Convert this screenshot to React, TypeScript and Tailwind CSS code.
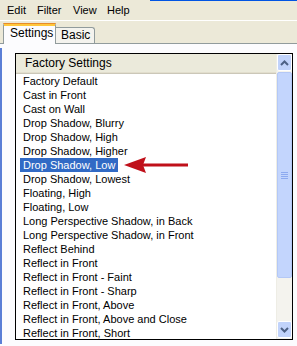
const presets = [
  "Factory Default",
  "Cast in Front",
  "Cast on Wall",
  "Drop Shadow, Blurry",
  "Drop Shadow, High",
  "Drop Shadow, Higher",
  "Drop Shadow, Low",
  "Drop Shadow, Lowest",
  "Floating, High",
  "Floating, Low",
  "Long Perspective Shadow, in Back",
  "Long Perspective Shadow, in Front",
  "Reflect Behind",
  "Reflect in Front",
  "Reflect in Front - Faint",
  "Reflect in Front - Sharp",
  "Reflect in Front, Above",
  "Reflect in Front, Above and Close",
  "Reflect in Front, Short",
];

const selected = "Drop Shadow, Low";

function Chevron({ up }: { up?: boolean }) {
  return (
    <svg width="9" height="6" viewBox="0 0 9 6">
      <path
        d={up ? "M1 5 L4.5 1.5 L8 5" : "M1 1 L4.5 4.5 L8 1"}
        fill="none"
        stroke="#4d6185"
        strokeWidth="2"
      />
    </svg>
  );
}

function ScrollBar() {
  return (
    <div className="flex flex-col w-[16px] bg-[#f4f3ee] border-l border-[#eeede5]">
      <div className="h-[17px] flex items-center justify-center rounded-[2px] border border-white bg-[#c1d3fb]">
        <Chevron up />
      </div>
      <div className="h-[206px] mt-px flex items-center justify-center rounded-[2px] border border-[#b4c8f6] bg-[#c3d5fd]">
        <div className="flex flex-col gap-px">
          <div className="w-[7px] h-px bg-[#8daaf0]" />
          <div className="w-[7px] h-px bg-[#8daaf0]" />
          <div className="w-[7px] h-px bg-[#8daaf0]" />
          <div className="w-[7px] h-px bg-[#8daaf0]" />
        </div>
      </div>
      <div className="flex-1" />
      <div className="h-[17px] mb-px flex items-center justify-center rounded-[2px] border border-white bg-[#c1d3fb]">
        <Chevron />
      </div>
    </div>
  );
}

export default function App() {
  return (
    <div className="w-[297px] h-[346px] overflow-hidden bg-[#ece9d8] flex flex-col text-[11px] text-black font-['Liberation_Sans',Arial,sans-serif]">
      {/* menu */}
      <div className="h-[20px] flex items-center pl-px relative">
        <div className="absolute top-0 left-[150px] right-0 h-px bg-[#0054e3]" />
        <span className="w-[30px] pl-[6px]">Edit</span>
        <span className="w-[36px] pl-[6px]">Filter</span>
        <span className="w-[34px] pl-[6px]">View</span>
        <span className="pl-[6px]">Help</span>
      </div>
      <div className="h-px bg-white" />

      {/* tabs */}
      <div className="h-[23px] flex items-end pl-[3px] border-b border-[#919b9c]">
        <div className="relative z-10 -mb-px h-[21px] w-[53px] bg-[#fcfcfe] border-x border-[#919b9c] rounded-t-[3px] flex flex-col">
          <div className="h-px bg-[#e68b2c] -mx-px rounded-t-[3px]" />
          <div className="h-[2px] bg-[#ffc73c]" />
          <div className="pl-[6px] pt-[1px] leading-[13px] text-[12px]">Settings</div>
        </div>
        <div className="h-[16px] w-[39px] bg-[#f4f3ee] border-t border-r border-[#919b9c] rounded-tr-[3px] pl-[5px] leading-[14px] text-[12px]">
          Basic
        </div>
      </div>

      {/* page */}
      <div className="flex-1 bg-[#fcfcfe] flex">
        <div className="w-[2px] h-[296px] mt-[4px] bg-[#5b7fd6]" />
        <div className="relative ml-[13px] mt-[9px] w-[278px] h-[287px] border border-black flex overflow-hidden bg-white">
          <div className="flex-1 flex flex-col min-w-0">
            <div className="h-[20px] shrink-0 bg-[#ebeadb] flex flex-col">
              <div className="flex-1 pl-[9px] flex items-center text-[12px]">Factory Settings</div>
              <div className="h-px bg-[#e2decd]" />
              <div className="h-px bg-[#d6d2c2]" />
              <div className="h-px bg-[#cbc7b8]" />
            </div>
            <div className="flex flex-col">
              {presets.map((p) => (
                <div key={p} className="h-[14px] shrink-0 flex items-center leading-[14px] whitespace-nowrap">
                  <span
                    className={
                      p === selected
                        ? "ml-[4px] px-[3px] bg-[#316ac5] text-white"
                        : "ml-[4px] px-[3px]"
                    }
                  >
                    {p}
                  </span>
                </div>
              ))}
            </div>
          </div>
          <ScrollBar />

          {/* annotation arrow */}
          <svg className="absolute left-[108px] top-[101px]" width="66" height="20" viewBox="0 0 66 20">
            <polygon points="0,10 22,2 19,10 22,18" fill="#c0101a" />
            <rect x="19" y="8.5" width="45" height="3" fill="#c0101a" />
          </svg>
        </div>
      </div>
    </div>
  );
}
